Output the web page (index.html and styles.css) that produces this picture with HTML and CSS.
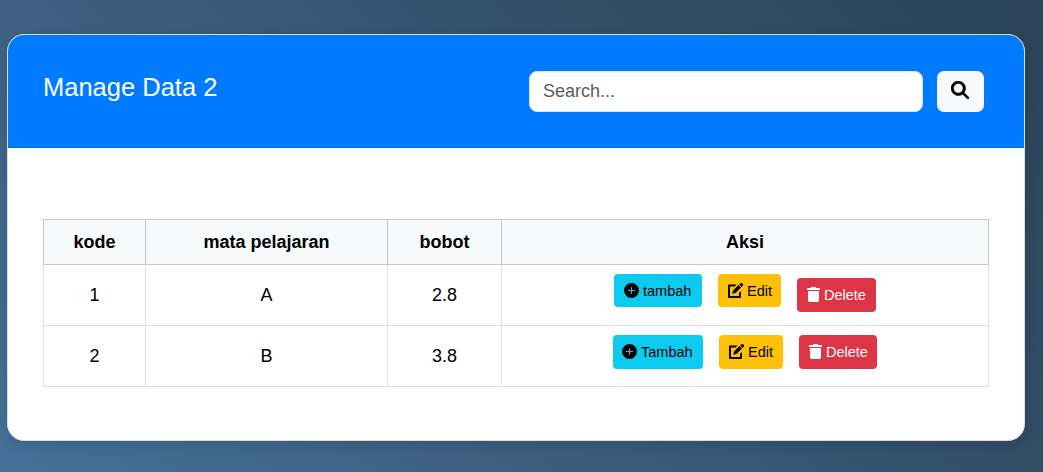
FILE: index.html
```html
<!DOCTYPE html>
<html lang="id">
<head>
<meta charset="utf-8">
<title>Manage Data 2</title>
<link rel="stylesheet" href="styles.css">
</head>
<body>
<svg class="sprite" aria-hidden="true">
  <symbol id="search" viewBox="0 0 512 512"><path d="M416 208c0 45.900-14.900 88.300-40 122.700L502.600 457.400c12.500 12.500 12.500 32.800 0 45.300s-32.800 12.500-45.300 0L330.700 376c-34.400 25.200-76.800 40-122.700 40C93.100 416 0 322.900 0 208S93.100 0 208 0S416 93.100 416 208zM208 342a134 134 0 1 0 0-268 134 134 0 1 0 0 268z" stroke="currentColor" stroke-width="10"/></symbol>
  <symbol id="plus" viewBox="0 0 15 15"><path fill-rule="evenodd" d="M7.500 0a7.500 7.500 0 1 1 0 15a7.500 7.500 0 0 1 0-15zM7 4v3H4v1h3v3h1V8h3V7H8V4z"/></symbol>
  <symbol id="edit" viewBox="0 0 15 15"><path d="M14.500.600c-.7-.7-1.700-.7-2.400 0l-.9.900 2.400 2.400.9-.9c.7-.7.7-1.700 0-2.400zM10.500 2.100L5 7.600 4.300 10.800 7.500 10.100 13 4.600zM.8 1.500C.3 1.500 0 1.800 0 2.300v11.900c0 .5.3.8.8.8h11.400c.5 0 .8-.3.800-.8V8l-2 2v3H2V3.500h4.600l2-2z"/></symbol>
  <symbol id="trash" viewBox="0 0 13 15"><path d="M4 .5C4.200.2 4.400 0 4.800 0h3.400c.4 0 .6.200.8.500L9.300 1H13v2H0V1h3.700zM1 4h11v9.600c0 .8-.6 1.400-1.400 1.400H2.400C1.600 15 1 14.400 1 13.600z"/></symbol>
</svg>
<main class="card">
  <header class="card-header">
    <h1 class="title">Manage Data 2</h1>
    <form class="search">
      <input class="search-input" type="text" placeholder="Search..." aria-label="Search">
      <button class="search-button" type="button" aria-label="Search"><svg class="search-icon"><use href="#search"/></svg></button>
    </form>
  </header>
  <section class="card-body">
    <table class="data-table">
      <colgroup><col class="col-code"><col class="col-subject"><col class="col-weight"><col class="col-actions"></colgroup>
      <thead><tr><th>kode</th><th>mata pelajaran</th><th>bobot</th><th>Aksi</th></tr></thead>
      <tbody>
        <tr><td>1</td><td>A</td><td>2.8</td><td>
          <div class="actions actions-first">
            <button class="btn btn-add"><svg class="icon"><use href="#plus"/></svg>tambah</button>
            <button class="btn btn-edit"><svg class="icon"><use href="#edit"/></svg>Edit</button>
            <button class="btn btn-delete"><svg class="icon icon-narrow"><use href="#trash"/></svg>Delete</button>
          </div></td></tr>
        <tr><td>2</td><td>B</td><td>3.8</td><td>
          <div class="actions actions-second">
            <button class="btn btn-add"><svg class="icon"><use href="#plus"/></svg>Tambah</button>
            <button class="btn btn-edit"><svg class="icon"><use href="#edit"/></svg>Edit</button>
            <button class="btn btn-delete"><svg class="icon icon-narrow"><use href="#trash"/></svg>Delete</button>
          </div></td></tr>
      </tbody>
    </table>
  </section>
</main>
</body>
</html>
```
FILE: styles.css
```css
* { box-sizing: border-box; }
body {
  margin: 0;
  height: 472px;
  padding: 34px 18px 31px 7px;
  overflow: hidden;
  font-family: "Liberation Sans", Arial, sans-serif;
  font-size: 18px;
  color: #000;
  background: linear-gradient(45deg, #457199 0%, #3e6182 30%, #325069 65%, #2c4359 100%);
}
.sprite { display: none; }
svg { fill: currentColor; flex: none; }
.card {
  height: 407px;
  border: 1px solid #d9dee3;
  border-radius: 17px;
  overflow: hidden;
  background: #fff;
  box-shadow: 0 4px 14px rgba(0, 0, 0, .12);
}
.card-header {
  height: 113px;
  display: flex;
  justify-content: space-between;
  align-items: flex-start;
  padding: 36px 40px 0 35px;
  background: #007bff;
  border-bottom: 1px solid #006cdf;
}
.title {
  margin: 0;
  font-size: 25.500px;
  font-weight: 400;
  line-height: 32px;
  color: #fff;
}
.search { display: flex; gap: 14px; margin: 0; }
.search-input {
  width: 394px;
  height: 41px;
  padding: 0 13px;
  border: 1px solid #d5e8fb;
  border-radius: 8px;
  font: inherit;
  background: #fff;
}
.search-input::placeholder { color: #595c5f; opacity: 1; }
.search-button {
  width: 47px;
  height: 41px;
  display: flex;
  align-items: center;
  justify-content: center;
  padding: 0 1px 3px 0;
  border: 0;
  border-radius: 7px;
  color: #000;
  background: #f8f9fb;
}
.search-icon { width: 18px; height: 18px; }
.card-body { padding: 71px 35px 0; }
.data-table {
  width: 946px;
  table-layout: fixed;
  border-collapse: collapse;
  text-align: center;
}
.col-code { width: 102px; }
.col-subject { width: 242px; }
.col-weight { width: 114px; }
th, td { padding: 0; }
th {
  height: 45px;
  border: 1px solid #c6c7c8;
  background: #f8f9fb;
  font-weight: 700;
}
td { height: 61px; border: 1px solid #dee2e6; border-top-color: #dfe0e1; }
.actions { display: flex; justify-content: center; gap: 16px; height: 38px; }
.actions-first { margin-bottom: 4px; }
.actions-second { height: 34px; margin-bottom: 8px; }
.btn {
  height: 34px;
  display: flex;
  align-items: center;
  justify-content: flex-start;
  gap: 4px;
  padding: 0 0 1px 10px;
  border: 0;
  border-radius: 4px;
  font: 14.500px "Liberation Sans", Arial, sans-serif;
  white-space: nowrap;
}
.btn-add { color: #000; background: #0dcaf0; }
.btn-edit { color: #000; background: #ffc107; }
.btn-delete { color: #fff; background: #dc3545; }
.actions-first .btn-add { width: 88px; height: 33px; padding-bottom: 0; }
.actions-first .btn-edit { width: 63px; height: 33px; padding-bottom: 0; }
.actions-first .btn-delete { width: 79px; margin-top: 4px; }
.actions-second .btn-add { width: 90px; padding-left: 9px; }
.actions-second .btn-edit { width: 64px; }
.actions-second .btn-delete { width: 78px; }
.icon { width: 15px; height: 15px; }
.icon-narrow { width: 13px; }
```
